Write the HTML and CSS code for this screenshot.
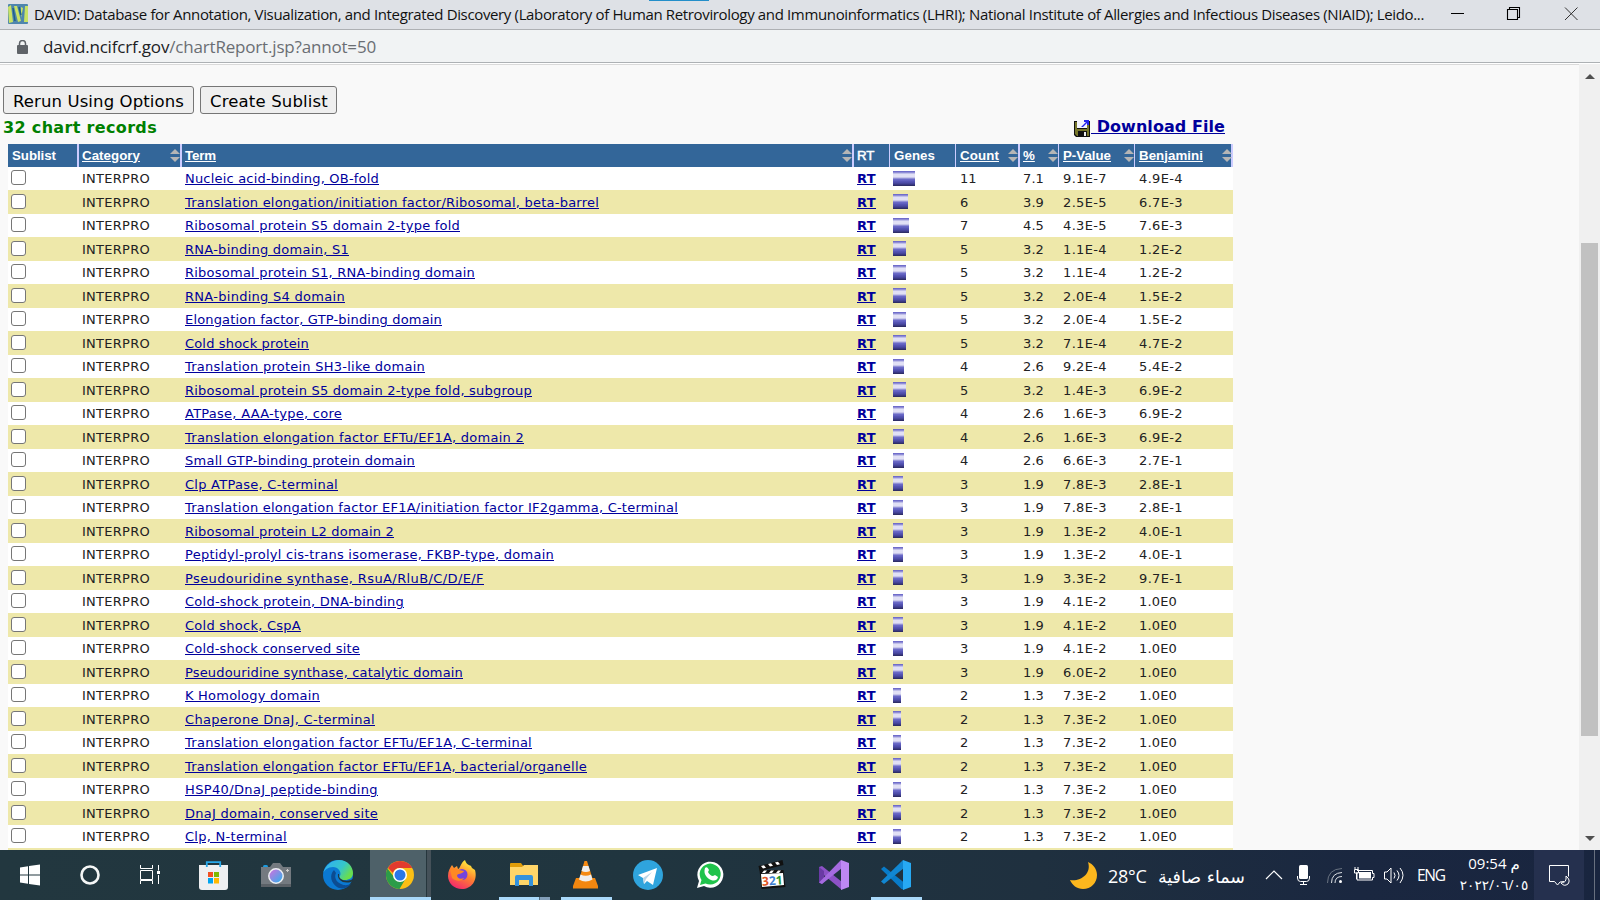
FILE: index.html
```html
<!DOCTYPE html>
<html lang="en">
<head>
<meta charset="utf-8">
<title>DAVID Chart Report</title>
<link rel="stylesheet" href="styles.css">
</head>
<body>
<header class="titlebar">
  <svg class="favicon" width="20" height="20" viewBox="0 0 20 20"><rect width="20" height="20" rx="1" fill="#4f86ad"/><path d="M0 3l3-2 2 17-4 1zM6 2h3l4 15-3 1zM13 3l2 1-2 10zM17 2h3v16h-4z" fill="#c9e265"/><path d="M5 4l2 13M11 3l2 8" stroke="#1f5f86" stroke-width="1.5"/></svg>
  <span class="window-title"><span data-fit="1390">DAVID: Database for Annotation, Visualization, and Integrated Discovery (Laboratory of Human Retrovirology and Immunoinformatics (LHRI); National Institute of Allergies and Infectious Diseases (NIAID); Leido...</span></span>
  <i class="load-mark"></i>
  <svg class="window-buttons" width="146" height="29" viewBox="1440 0 146 29" fill="none" stroke="#000"><path d="M1451 13.5h13"/><path d="M1507.500 9.500h10v10h-10zM1509.500 9.500v-2h10v10h-2" stroke-width="1.1"/><path d="M1565 7.500l12.500 12.500M1577.500 7.500l-12.500 12.500" stroke="#333"/></svg>
</header>
<div class="addressbar">
  <svg class="lock" width="11" height="15" viewBox="0 0 11 15"><rect y="5" width="11" height="9" rx="1" fill="#5f6368"/><path d="M2.500 5.500v-2a3 3 0 0 1 6 0v2" fill="none" stroke="#5f6368" stroke-width="1.500"/></svg>
  <span class="url" data-fit="333">david.ncifcrf.gov<span class="path">/chartReport.jsp?annot=50</span></span>
</div>
<div class="viewport">
  <main class="page">
    <div class="actions">
      <button class="btn rerun"><span data-fit="171">Rerun Using Options</span></button>
      <button class="btn create"><span data-fit="118">Create Sublist</span></button>
    </div>
    <div class="summary">
      <strong class="records"><span data-fit="154">32 chart records</span></strong>
      <a class="download"><svg width="17" height="19" viewBox="0 0 17 19"><path d="M0 2h16v16H2L0 16z" fill="#111"/><path d="M1 3h2v7h10V3h2v14h-2v-5H4v5H3l-2-2z" fill="#77772b"/><path d="M3 2h10v7H3z" fill="#f4f4ff"/><path d="M10 13h2v4h-2z" fill="#eee"/><path d="M7 8l5-5h-2V1h5v5h-2V4L9 8z" fill="#2424ed"/></svg><span class="download-label" data-fit="134">&nbsp;Download File</span></a>
    </div>
    <table class="chart">
      <colgroup><col class="c1"><col class="c2"><col class="c3"><col class="c4"><col class="c5"><col class="c6"><col class="c7"><col class="c8"><col class="c9"></colgroup>
      <thead><tr>
        <th><span data-fit="44">Sublist</span></th>
        <th class="sort wide"><u data-fit="58">Category</u></th>
        <th class="sort wide"><u data-fit="31">Term</u></th>
        <th class="wide"><span class="rt-head">RT</span></th>
        <th><span data-fit="41">Genes</span></th>
        <th class="sort"><u data-fit="39">Count</u></th>
        <th class="sort wide"><u>%</u></th>
        <th class="sort"><u data-fit="48">P-Value</u></th>
        <th class="sort last"><u data-fit="64">Benjamini</u></th>
      </tr></thead>
      <tbody id="rows"></tbody>
    </table>
  </main>
  <aside class="scrollbar"><i class="arrow up"></i><i class="thumb"></i><i class="arrow down"></i></aside>
</div>
<footer class="taskbar">
  <svg class="sys" viewBox="0 850 60 50"><path d="M20 867.500l8-1.200v8.200h-8zM29 866l11-1.500v10H29zM20 875.500h8v8.200l-8-1.200zM29 875.500h11v10L29 884z" fill="#fff"/></svg>
  <svg class="sys" viewBox="60 850 60 50"><circle cx="90" cy="875" r="8.500" fill="none" stroke="#f4f6f6" stroke-width="2.600"/></svg>
  <svg class="sys" viewBox="120 850 60 50" fill="none" stroke="#fff"><path d="M140.500 865v3.500h12V865M140.500 870.500h12v9h-12zM140.500 884v-3.500h12v3.500M158.500 865v5.500M158.500 875v9"/><path d="M157 871h3v3h-3z" fill="#fff" stroke="none"/></svg>
  <svg class="app first" viewBox="183 850 62 50"><path d="M199 865h29v22q0 3-3 3h-23q-3 0-3-3z" fill="#eeeff1"/><path d="M206.800 867v-4.800h13.400v4.800" fill="none" stroke="#28a8ea" stroke-width="1.800"/><path d="M208 872h5v5h-5z" fill="#f25022"/><path d="M214 872h5v5h-5z" fill="#7fba00"/><path d="M208 878h5v5.500h-5z" fill="#00a4ef"/><path d="M214 878h5v5.500h-5z" fill="#ffb900"/></svg>
  <svg class="app" viewBox="245 850 62 50"><defs><linearGradient id="lens" x1="0" y1="0" x2="1" y2="1"><stop offset=".2" stop-color="#b57be0"/><stop offset="1" stop-color="#22b5ee"/></linearGradient></defs><rect x="263" y="865" width="5" height="4" rx="1.500" fill="#1b9be0"/><path d="M261 867h9l3-4h7l3 4h8v20h-30z" fill="#747a80"/><path d="M261 884h30v3h-30z" fill="#5b6167"/><circle cx="276" cy="876" r="7.200" fill="url(#lens)" stroke="#eef0f4" stroke-width="1.500"/><path d="M287.500 869v3M286 870.500h3" stroke="#ccc"/></svg>
  <svg class="app" viewBox="307 850 62 50"><defs><linearGradient id="edge" x1="0" y1="0" x2="1" y2=".5"><stop offset=".2" stop-color="#31b4ec"/><stop offset=".65" stop-color="#36c6c9"/><stop offset="1" stop-color="#69de4d"/></linearGradient></defs><circle cx="338" cy="875" r="15" fill="#0b79d2"/><path d="M323 874c2-9 9-14 16-14 9 0 14 7 14 13 0 5-4 7-8 7-5 0-7-2-5-4 2-4-2-9-7-9-5 0-9 3-10 7z" fill="url(#edge)"/><path d="M334 870c-5 5-3 13 3 17 5 3 11 1 14-3-3 1-6 2-10 0-5-2-7-7-5-11z" fill="#0c4c92"/><path d="M339 874c-1 5 5 8 12 6l3-2v2l-3 2c-8 2-14-2-13-8z" fill="#21363f"/></svg>
  <div class="app active"><svg viewBox="370 850 56 47"><circle cx="400" cy="875" r="14" fill="#fbbf15"/><path d="M387.500 868.500A14 14 0 0 0 399.500 889l6.500-11-12-1z" fill="#2c9c49"/><path d="M388 868a14 14 0 0 1 24.300 0H400a7 7 0 0 0-7 5z" fill="#e33b2e"/><circle cx="400" cy="875" r="7" fill="#fff"/><circle cx="400" cy="875" r="5.500" fill="#2a77ea"/></svg></div>
  <svg class="app" viewBox="431 850 62 50"><defs><linearGradient id="fire" x1=".8" y1="0" x2=".3" y2="1"><stop offset=".1" stop-color="#ffe83d"/><stop offset=".5" stop-color="#ff832f"/><stop offset="1" stop-color="#f2266e"/></linearGradient></defs><path d="M448 876c0-5 2-8 4-11l2 3 3-2 1 3c2 0 3-7 7-9 1 4 4 5 6 6l1 2 3 2c3 11-4 19-13 19-8 0-14-6-14-13z" fill="url(#fire)"/><circle cx="462" cy="874.500" r="5.500" fill="#7544dc"/><path d="M450 869c4-2 7 0 9 1l5 1c-1 3-5 2-7 4 0 3 3 5 7 3-1 3-8 4-12 0z" fill="#ff8924"/></svg>
  <svg class="app" viewBox="493 850 62 50"><path d="M510 864q0-1 1-1h10l3 4h-14z" fill="#df9c09"/><path d="M510 867h12l2-2h14v20h-28z" fill="#ffd568"/><path d="M515 886v-9q0-2 2-2h14q2 0 2 2v9h-4v-6h-10v6z" fill="#3492dc"/><path d="M499 897h40v3h-40z" fill="#a9d9fa"/><path d="M539.500 897h10.500v3h-10.500z" fill="#829fb9"/></svg>
  <svg class="app" viewBox="555 850 62 50"><path d="M576 878h19l3 8v2.500h-25V886z" fill="#f28710"/><path d="M584.500 861h2.500l6 19q-7 5-14 0z" fill="#f58a13"/><path d="M583 866h5.500l1.500 5q-4 2-8.500 0zM580.500 874.500q5 2.500 10.500 0l1.500 5q-7 4-13.500 0z" fill="#eee"/><path d="M561 897h51v3h-51z" fill="#a9d9fa"/></svg>
  <svg class="app" viewBox="617 850 62 50"><circle cx="648" cy="875" r="15" fill="#2fa4dd"/><path d="M638 875l19-7-4 17-6-4-3 3-1-6z" fill="#fff"/><path d="M643 878l9-6-6 7-2 5z" fill="#bbd6e7"/></svg>
  <svg class="app" viewBox="679 850 62 50"><path d="M697 888l2-7a13 13 0 1 1 5 5z" fill="#fff"/><path d="M700 885l1.500-5a10.500 10.500 0 1 1 4 3.500z" fill="#20c34b"/><path d="M705 868c2-2 3 0 4 2l-1 2c1 2 3 4 5 4l2-1 3 2c-1 4-4 4-7 3-4-2-8-6-6-12z" fill="#fff"/></svg>
  <svg class="app" viewBox="741 850 62 50"><path d="M758.500 866l24-6 1 5-24 6zM759.500 870h24l2 17-24 2z" fill="#111"/><path d="M761 866l3-.8 2 2.600-3 .8zM768 864l3-.8 2 2.600-3 .8zM775 862.500l3-.8 2 2.600-3 .8zM764 870.500h3l-2 2.500h-3zM771 870.500h3l-2 2.500h-3zM778 870.500h3l-2 2.500h-3z" fill="#fff"/><path d="M761 874l22-1 1 12-22 2z" fill="#fff"/><text x="762" y="885" transform="rotate(-4 772 880)" class="mpc"><tspan fill="#df5424">3</tspan><tspan fill="#3e7fd2">2</tspan><tspan fill="#26962e">1</tspan></text></svg>
  <svg class="app" viewBox="803 850 62 50"><path d="M819 867l3-1 20 16v8L819 871z" fill="#8d52c7"/><path d="M819 867v15.500l3 1.500 4-4-2-2v-7z" fill="#6a3aa5"/><path d="M841 860l1 8-20 16-3-1.500z" fill="#a56be0"/><path d="M841 860l8 3v24l-8 3z" fill="#be88f4"/></svg>
  <svg class="app" viewBox="865 850 62 50"><path d="M881 869l3-2.500 20 16v7.500l-3-1.500z" fill="#087bc8"/><path d="M903 860l1 8-20 16-3-2.500z" fill="#1187d2"/><path d="M903 860l8 3v24l-8 3z" fill="#27a9f3"/><path d="M871 897h51v3h-51z" fill="#a9d9fa"/></svg>
  <div class="tray">
    <svg class="moon" width="28" height="28" viewBox="1070 862 28 28"><path d="M1088 862c5 2 9 7 9 13 0 8-6 14-14 14-6 0-11-4-13-9 10 2 22-6 18-18z" fill="#fcb71e"/></svg>
    <span class="temp" data-fit="37">28°C</span>
    <span class="weather" dir="rtl">سماء صافية</span>
    <svg class="status" width="186" height="50" viewBox="1260 850 186 50" fill="none" stroke="#fff"><path d="M1266 879l8-8 8 8" stroke-width="1.200"/><rect x="1299" y="865" width="9" height="14" rx="1.500" fill="#fff" stroke="none"/><path d="M1297.500 876v2q0 3.500 3 3.500h6q3 0 3-3.500v-2M1303.500 882v2.500M1300 884.500h7"/><path d="M1327.500 883q0-14 14.500-14.500" stroke="#697381"/><path d="M1331.500 883q0-10 10.500-10.500M1335 883q0-6.500 7-6.500" stroke="#dde1e5"/><circle cx="1340.500" cy="881.500" r="1.500" fill="#fff" stroke="none"/><path d="M1357 870.500h15.500v3h1.500v4h-1.500v2.500h-15.500v-8M1354.500 869.500h4v3.500h-4zM1355 869v-2M1358 869v-2M1356.500 873v6"/><path d="M1359 872h12v6.500h-12z" fill="#fff" stroke="none"/><path d="M1384.500 872h2.500l4-4v15l-4-4h-2.500zM1394 872.500q2 3 0 6M1397 870.500q4 5 0 10M1400 868q6 7 0 15"/><text x="1417" y="881" class="eng" textLength="29">ENG</text></svg>
    <div class="clock"><span dir="ltr"><span data-fit="47">09:54 م</span></span><span class="date" dir="ltr">٢٠٢٢/٠٦/٠٥</span></div>
    <svg class="notice" width="50" height="50" viewBox="1534 850 50 50"><path d="M1564 881.500l-4 .500-2.500 3-3-3.500h-5v-16h19v11" fill="none" stroke="#fff"/><path d="M1566 876q5 4 2 8-4 3-7-1 6 0 5-7z" fill="#25304e" stroke="#fff"/></svg>
    <i class="desktop-line"></i>
  </div>
</footer>
<script src="app.js"></script>
</body>
</html>
```
FILE: styles.css
```css
* { box-sizing: border-box; }
body { margin: 0; width: 1600px; height: 900px; overflow: hidden; display: flex; flex-direction: column; background: #f9f9f9; font-family: Verdana, "DejaVu Sans", sans-serif; }
svg { display: block; flex: none; }
[data-fit] { display: inline-block; white-space: pre; flex: none; }
.titlebar { position: relative; height: 30px; flex: none; display: flex; background: #dee1e6; border-bottom: 1px solid #adb0b3; font: 15px/28px "Open Sans", sans-serif; color: #111; }
.favicon { margin: 4px 6px 0 8px; }
.window-title { width: 1406px; white-space: nowrap; }
.load-mark { position: absolute; left: 649px; top: 0; width: 60px; height: 1px; background: #238ec9; }
.addressbar { height: 33px; flex: none; display: flex; background: #f1f3f4; border-bottom: 1px solid #adb1b4; font: 17px/33px "Open Sans", sans-serif; color: #202124; }
.lock { margin: 10px 15px 0 17px; }
.path { color: #6a6e73; }
.viewport { height: 787px; flex: none; display: flex; border-top: 1px solid #fff; overflow: hidden; }
.page { flex: 1; overflow: hidden; border-top: 1px solid #dadada; padding: 21px 0 0; }
.actions { display: flex; gap: 6px; padding-left: 3px; }
.btn { height: 28px; border: 1px solid #767676; border-radius: 3px; background: #efefef; padding: 2px 9px 0; text-align: left; font: 16.5px/26px Verdana, "DejaVu Sans", sans-serif; color: #000; }
.rerun { width: 191px; }
.create { width: 137px; }
.summary { height: 30px; display: flex; justify-content: space-between; width: 1225px; padding-left: 3px; }
.records { font-size: 16px; line-height: 27px; color: #008000; }
.download { display: flex; color: #00009c; font-weight: bold; font-size: 16px; line-height: 26px; text-decoration: none; }
.download svg { margin: 5px 0 0; }
.download-label { text-decoration: underline; }
.chart { width: 1225px; margin-left: 8px; table-layout: fixed; border-collapse: separate; border-spacing: 0; color: #222; font-size: 13px; }
.c1 { width: 69px; } .c2 { width: 103px; } .c3 { width: 672px; } .c4 { width: 37px; } .c5 { width: 66px; } .c6 { width: 63px; } .c7 { width: 40px; } .c8 { width: 76px; } .c9 { width: 99px; }
th { height: 23px; padding: 0 0 0 4px; text-align: left; background: #336699; color: #fff; border-left: 1px solid #ccccff; font: bold 13.300px/22px "Liberation Sans", Arial, sans-serif; }
th:first-child { border-left: 0; padding-left: 4px; }
th.wide { border-left-width: 2px; padding-left: 3px; }
th.last { border-right: 2px solid #ccccff; }
.rt-head { font-weight: normal; -webkit-text-stroke: .5px #fff; }
.sort { position: relative; }
.sort::before, .sort::after { content: ""; position: absolute; right: 0; border: 5px solid transparent; }
.sort::before { top: 0; border-bottom: 5px solid #b5b5b5; }
.sort::after { top: 13px; border-top: 5px solid #b5b5b5; }
.last::before, .last::after { right: -1px; }
.chart tbody tr { height: 23px; background: #fff; }
.chart tbody tr.alt { height: 24px; background: #eee8aa; }
td { height: 23px; padding: 2px 0 0 5px; line-height: 20px; vertical-align: top; white-space: nowrap; overflow: hidden; }
td > span, td > a { vertical-align: top; }
.num:nth-child(6) { padding-left: 5px; }
.alt td { height: 24px; padding-top: 3px; }
td:first-child { padding-left: 3px; }
td a { color: #00009c; text-decoration: underline; }
.rt { font-weight: bold; }
.check { display: block; width: 15px; height: 15px; margin-top: 1px; border: 1px solid #767676; border-radius: 3px; background: #fff; }
.bar { display: block; height: 15px; margin: 2px 0 0 -1px; background: linear-gradient(#6f6ccb 0 1px, #8f8dd7 1px 2px, #c0bfe9 2px 3px, #e1e0f5 3px 6px, #c6c5e9 6px 7px, #9190d6 7px 8px, #6a69c6 8px 9px, #5958b9 10px, #4b4aa4 12px, #343377 14px, #292857 15px); }
.alt .bar { margin-top: 1px; }
.scrollbar { width: 21px; background: #f0f0f0; display: flex; flex-direction: column; align-items: center; }
.arrow { border: 5px solid transparent; }
.up { border-top: 0; border-bottom-color: #505050; margin-top: 10px; }
.thumb { width: 17px; height: 493px; background: #c1c1c1; margin: 164px 0 100px; }
.down { border-bottom: 0; border-top-color: #505050; }
.taskbar { height: 50px; flex: none; display: flex; background: linear-gradient(90deg, #22373f 0, #20353f 40%, #1f303f 65%, #1a2740 85%, #19253f); color: #fff; }
.sys { width: 60px; height: 50px; }
.app { width: 62px; height: 50px; flex: none; }
.first { margin-left: 3px; }
.active { width: 61px; margin-left: 1px; background: linear-gradient(90deg, #4e6169 0 56px, #26363d 56px 57px, #455159 57px); border-bottom: 3px solid #a9d9fa; }
.active svg { width: 56px; height: 47px; }
.mpc { font: bold 12px "Open Sans", sans-serif; }
.tray { display: flex; flex: 1; padding-left: 143px; font: 17px/50px "Open Sans", sans-serif; }
.moon { margin: 12px 10px 0 0; }
.temp { font-size: 18px; line-height: 52px; width: 38px; }
.weather { margin-left: 11px; width: 88px; white-space: nowrap; font: 17.5px/54px "DejaVu Sans", sans-serif; }
.status { margin-left: 15px; }
.eng { font: 15.500px "Open Sans", sans-serif; fill: #fff; stroke: none; }
.clock { width: 88px; height: 50px; padding: 2px 6px 0 14px; display: flex; flex-direction: column; align-items: center; font: 15px/22px "Open Sans", "DejaVu Sans", sans-serif; }
.clock > span { white-space: nowrap; height: 22px; }
.clock .date { font-size: 13.6px; }
.notice { background: #25304e; }
.desktop-line { width: 1px; height: 50px; margin-left: 10px; background: #68707f; }
```
FILE: app.js
```js
// term, label width, count, percent, p-value, benjamini
const records = [
  ["Nucleic acid-binding, OB-fold", 194, 11, "7.1", "9.1E-7", "4.9E-4"],
  ["Translation elongation/initiation factor/Ribosomal, beta-barrel", 414, 6, "3.9", "2.5E-5", "6.7E-3"],
  ["Ribosomal protein S5 domain 2-type fold", 275, 7, "4.5", "4.3E-5", "7.6E-3"],
  ["RNA-binding domain, S1", 164, 5, "3.2", "1.1E-4", "1.2E-2"],
  ["Ribosomal protein S1, RNA-binding domain", 290, 5, "3.2", "1.1E-4", "1.2E-2"],
  ["RNA-binding S4 domain", 160, 5, "3.2", "2.0E-4", "1.5E-2"],
  ["Elongation factor, GTP-binding domain", 257, 5, "3.2", "2.0E-4", "1.5E-2"],
  ["Cold shock protein", 124, 5, "3.2", "7.1E-4", "4.7E-2"],
  ["Translation protein SH3-like domain", 240, 4, "2.6", "9.2E-4", "5.4E-2"],
  ["Ribosomal protein S5 domain 2-type fold, subgroup", 347, 5, "3.2", "1.4E-3", "6.9E-2"],
  ["ATPase, AAA-type, core", 157, 4, "2.6", "1.6E-3", "6.9E-2"],
  ["Translation elongation factor EFTu/EF1A, domain 2", 339, 4, "2.6", "1.6E-3", "6.9E-2"],
  ["Small GTP-binding protein domain", 230, 4, "2.6", "6.6E-3", "2.7E-1"],
  ["Clp ATPase, C-terminal", 153, 3, "1.9", "7.8E-3", "2.8E-1"],
  ["Translation elongation factor EF1A/initiation factor IF2gamma, C-terminal", 493, 3, "1.9", "7.8E-3", "2.8E-1"],
  ["Ribosomal protein L2 domain 2", 209, 3, "1.9", "1.3E-2", "4.0E-1"],
  ["Peptidyl-prolyl cis-trans isomerase, FKBP-type, domain", 369, 3, "1.9", "1.3E-2", "4.0E-1"],
  ["Pseudouridine synthase, RsuA/RluB/C/D/E/F", 299, 3, "1.9", "3.3E-2", "9.7E-1"],
  ["Cold-shock protein, DNA-binding", 219, 3, "1.9", "4.1E-2", "1.0E0"],
  ["Cold shock, CspA", 116, 3, "1.9", "4.1E-2", "1.0E0"],
  ["Cold-shock conserved site", 175, 3, "1.9", "4.1E-2", "1.0E0"],
  ["Pseudouridine synthase, catalytic domain", 278, 3, "1.9", "6.0E-2", "1.0E0"],
  ["K Homology domain", 135, 2, "1.3", "7.3E-2", "1.0E0"],
  ["Chaperone DnaJ, C-terminal", 190, 2, "1.3", "7.3E-2", "1.0E0"],
  ["Translation elongation factor EFTu/EF1A, C-terminal", 347, 2, "1.3", "7.3E-2", "1.0E0"],
  ["Translation elongation factor EFTu/EF1A, bacterial/organelle", 402, 2, "1.3", "7.3E-2", "1.0E0"],
  ["HSP40/DnaJ peptide-binding", 193, 2, "1.3", "7.3E-2", "1.0E0"],
  ["DnaJ domain, conserved site", 193, 2, "1.3", "7.3E-2", "1.0E0"],
  ["Clp, N-terminal", 102, 2, "1.3", "7.3E-2", "1.0E0"]
];
const barWidth = { 11: 22, 7: 16, 6: 15, 5: 13, 4: 11, 3: 10, 2: 8 };
document.getElementById("rows").innerHTML = records.map(([term, w, n, pct, p, b], i) =>
  `<tr class="${i % 2 ? "alt" : ""}"><td><i class="check"></i></td><td><span data-fit="68">INTERPRO</span></td><td><a data-fit="${w}">${term}</a></td><td><a class="rt" data-fit="19">RT</a></td><td><i class="bar" style="width:${barWidth[n]}px"></i></td><td class="num">${n}</td><td class="num"><span data-fit="21">${pct}</span></td><td class="num"><span data-fit="44">${p}</span></td><td class="num"><span data-fit="${b.length > 5 ? 44 : 38}">${b}</span></td></tr>`
).join("") + `<tr class="alt"><td colspan="9"></td></tr>`;

document.querySelectorAll("[data-fit]").forEach(el => {
  const gap = (el.dataset.fit - el.getBoundingClientRect().width) / el.textContent.length;
  el.style.letterSpacing = gap + "px";
});
```
